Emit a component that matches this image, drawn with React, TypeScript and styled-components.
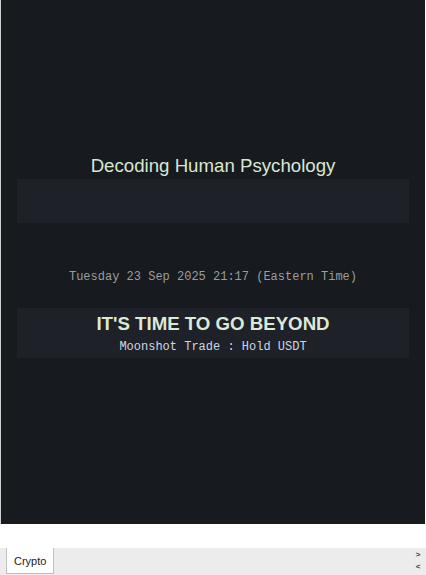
import React from "react";
import styled, { createGlobalStyle } from "styled-components";

const Global = createGlobalStyle`
  html, body { margin: 0; padding: 0; background: #ffffff; }
  body { width: 426px; height: 575px; overflow: hidden; }
`;

const Page = styled.div`
  display: flex;
  flex-direction: column;
  width: 426px;
  height: 575px;
`;

const Panel = styled.div`
  height: 524px;
  margin: 0 1px 0 0;
  background: #171a1f;
  display: flex;
  flex-direction: column;
  align-items: stretch;
  padding: 155px 16px 0;
  box-sizing: border-box;
  border-left: 1px solid #cfcfcf;
`;

const Title = styled.div`
  font-family: "Liberation Sans", Arial, sans-serif;
  font-size: 18.67px;
  color: #d9e7d1;
  text-align: center;
  line-height: 22px;
  margin-bottom: 2px;
`;

const Block = styled.div<{ $h: number; $pt?: number }>`
  background: #1f2128;
  height: ${(p) => p.$h}px;
  box-sizing: border-box;
  padding-top: ${(p) => p.$pt ?? 0}px;
  display: flex;
  flex-direction: column;
  align-items: center;
`;

const DateLine = styled.div`
  font-family: "Liberation Mono", "Courier New", monospace;
  font-size: 12px;
  color: #9b9e9e;
  text-align: center;
  line-height: 14px;
  margin: 47px 0 24px;
`;

const Headline = styled.div`
  font-family: "Liberation Sans", Arial, sans-serif;
  font-weight: bold;
  font-size: 18.67px;
  line-height: 22px;
  color: #dce9d6;
`;

const Sub = styled.div`
  font-family: "Liberation Mono", "Courier New", monospace;
  font-size: 12px;
  line-height: 14px;
  color: #c9d9e3;
  margin-top: 5px;
`;

const Gap = styled.div`
  height: 24px;
  background: #ffffff;
`;

const TabBar = styled.div`
  flex: 1;
  background: #ececec;
  display: flex;
  align-items: stretch;
  padding-left: 6px;
`;

const Tab = styled.div`
  background: #ffffff;
  border: 1px solid #c0c0c0;
  border-top: none;
  font-family: "Liberation Sans", Arial, sans-serif;
  font-size: 11px;
  color: #222;
  padding: 1px 7px 0;
  display: flex;
  align-items: center;
  height: 26px;
  box-sizing: border-box;
`;

const Arrows = styled.div`
  margin-left: auto;
  width: 10px;
  display: flex;
  flex-direction: column;
  justify-content: space-around;
  align-items: center;
  font-family: "Liberation Sans", Arial, sans-serif;
  font-size: 8px;
  font-weight: bold;
  color: #444;
  line-height: 8px;
  padding: 1px 3px 2px 0;
`;

export default function App() {
  return (
    <>
      <Global />
      <Page>
        <Panel>
          <Title>Decoding Human Psychology</Title>
          <Block $h={44} />
          <DateLine>Tuesday 23 Sep 2025 21:17 (Eastern Time)</DateLine>
          <Block $h={50} $pt={5}>
            <Headline>IT'S TIME TO GO BEYOND</Headline>
            <Sub>Moonshot Trade : Hold USDT</Sub>
          </Block>
        </Panel>
        <Gap />
        <TabBar>
          <Tab>Crypto</Tab>
          <Arrows>
            <span>&gt;</span>
            <span>&lt;</span>
          </Arrows>
        </TabBar>
      </Page>
    </>
  );
}
